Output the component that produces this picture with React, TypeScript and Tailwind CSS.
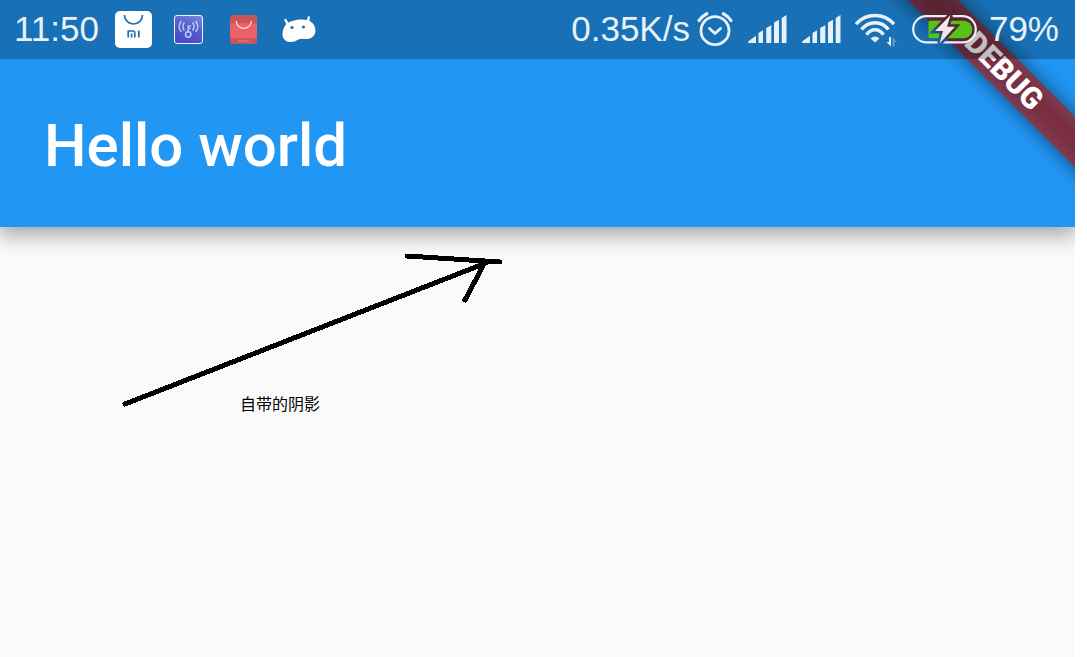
import React from 'react';

interface IconProps {
  className?: string;
}

const MiStoreIcon: React.FC<IconProps> = ({ className }) => (
  <svg viewBox="0 0 37 37" className={className} fill="none" aria-hidden="true">
    <rect width="37" height="37" rx="5" fill="#fff" />
    <path d="M9.500 4a9 9 0 0 0 18 0" stroke="#1b6fb5" strokeWidth="1.700" />
    <path d="M13.200 26.500V20h4.600q2 0 2 2v4.500M16.600 22.500v4M23.800 19.500v7" stroke="#1b6fb5" strokeWidth="1.700" />
  </svg>
);

const KeySignalIcon: React.FC<IconProps> = ({ className }) => (
  <svg viewBox="0 0 30 29" className={className} fill="none" aria-hidden="true">
    <defs>
      <linearGradient id="keyFill" x1="0.300" y1="1" x2="0.700" y2="0">
        <stop offset="0" stopColor="#4a47cc" />
        <stop offset="0.600" stopColor="#5560cc" />
        <stop offset="1" stopColor="#7284d8" />
      </linearGradient>
    </defs>
    <rect x="0.500" y="0.500" width="28" height="28" rx="2.500" fill="url(#keyFill)" stroke="#f0f2fa" />
    <g stroke="#bccdf2" strokeWidth="1.500">
      <circle cx="14.200" cy="19.500" r="2.700" />
      <path d="M14.200 17v-6.500M14.200 11h2.800M14.200 13.500h2.400" />
      <path d="M10.400 7.500q-3 4 0 8M7.400 6q-4.600 5.500 0 11M18.600 7.500q3 4 0 8M21.600 6q4.600 5.500 0 11" />
    </g>
  </svg>
);

const ShoppingBagIcon: React.FC<IconProps> = ({ className }) => (
  <svg viewBox="0 0 34 29" className={className} fill="none" aria-hidden="true">
    <rect x="4" width="27" height="29" rx="3" fill="#cb545b" />
    <path d="M4 8h27v15H4z" fill="#ee6068" />
    <circle cx="10" cy="5.500" r="1" fill="#8f3a45" />
    <circle cx="25.500" cy="5.500" r="1" fill="#8f3a45" />
    <path d="M10 5.500c1 10.500 14.500 10.500 15.500 0" stroke="#f7dcde" strokeWidth="1.300" />
    <path d="M12.500 26h10" stroke="#e9a2a6" strokeDasharray="2 1" />
  </svg>
);

const AndroidHeadIcon: React.FC<IconProps> = ({ className }) => (
  <svg viewBox="0 0 34 29" className={className} fill="none" aria-hidden="true">
    <path d="M4.500 9C10 4 24 3 28.500 6.500c5.500 3.500 6.500 11.500 2.500 15-3.500 3.500-8 2.500-11.500 2.200-3.500 0-5 3-10 3.300C4 27.500.5 24 .5 19.500.5 15 2 11.500 4.500 9Z" fill="#fff" />
    <path d="M3.500 5l3 5.500M26.800 2.500l-1.500 6" stroke="#fff" strokeWidth="2.500" strokeLinecap="round" />
    <circle cx="10" cy="12.500" r="1.600" fill="#1b6fb5" />
    <circle cx="21.500" cy="12" r="1.600" fill="#1b6fb5" />
  </svg>
);

const AlarmIcon: React.FC<IconProps> = ({ className }) => (
  <svg viewBox="0 0 36 35" className={className} fill="none" stroke="#e8f1f8" strokeLinecap="round" aria-hidden="true">
    <circle cx="19" cy="18.700" r="14" strokeWidth="2.800" />
    <path d="M3 8.500Q6 4 10.800 1.700M27.300 1.700Q32.300 4 35 8.500" strokeWidth="3.200" />
    <path d="M13.500 16.500l5.500 5 5.500-5" strokeWidth="2.800" strokeLinejoin="round" />
  </svg>
);

const SignalIcon: React.FC<IconProps> = ({ className }) => (
  <svg viewBox="0 0 40 29" className={className} fill="#e8f1f8" aria-hidden="true">
    <path d="M2 26.500L10 20.700V28H3Q2 28 2 26.500ZM12.500 18L17 15.300V28H12.500ZM20.200 13L25.300 10.300V28H20.200ZM28 7.500L33 4.800V28H28ZM35.700 3L40.500 0V28H35.700Z" />
  </svg>
);

const WifiIcon: React.FC<IconProps> = ({ className }) => (
  <svg viewBox="0 0 44 31" className={className} fill="none" aria-hidden="true">
    <g stroke="#e8f1f8" strokeWidth="3.500">
      <path d="M2 10.200Q9.500 1.500 21 1.500T40 10.200" />
      <path d="M7.500 15.500Q13 8.700 21 8.700T34.500 15.500" />
      <path d="M12.500 20.700Q16 15.800 21 15.800T29.500 20.700" />
    </g>
    <path d="M16.500 24.500q4.500-4 9 0L21 28.500Z" fill="#e8f1f8" />
    <path d="M37 23v9.500l-4.500-4.500h2.500V23Z" fill="#e8f1f8" />
    <path d="M38.500 32.500v-9.500l4.500 5h-2.500v4.500Z" fill="#5f9bcb" />
  </svg>
);

const BatteryIcon: React.FC<IconProps> = ({ className }) => (
  <svg viewBox="0 0 65 29" className={className} fill="none" aria-hidden="true">
    <mask id="boltGap" maskUnits="userSpaceOnUse" x="0" y="0" width="65" height="29">
      <path d="M0 0h65v29H0z" fill="#fff" />
      <path d="M38.600 0L23 16h8L27.500 28.500 43 11.700h-8Z" fill="#000" stroke="#000" strokeWidth="5" />
    </mask>
    <g mask="url(#boltGap)">
      <rect x="1.200" y="1.200" width="62.600" height="26.200" rx="13.100" stroke="#e8f1f8" strokeWidth="2.200" />
      <path d="M18 5.700h33.500a8.800 8.800 0 0 1 0 17.600H18q-1.500 0-1.500-1.500V7.200q0-1.500 1.500-1.500Z" fill="#55c417" />
    </g>
    <path d="M38.600 0L23 16h8L27.500 28.500 43 11.700h-8Z" fill="#efe7ee" />
  </svg>
);

const StatusBar: React.FC = () => (
  <div className="relative flex h-[59px] items-center justify-between bg-black/25 pr-4 pl-3.5 font-['Liberation_Sans',sans-serif] text-[35px] text-[#e8f1f8]">
    <div className="flex items-center gap-4">
      <time>11:50</time>
      <div className="flex items-center gap-[22px]">
        <MiStoreIcon className="h-[37px] w-[37px]" />
        <KeySignalIcon className="h-[29px] w-[30px]" />
        <ShoppingBagIcon className="h-[29px] w-[34px]" />
        <AndroidHeadIcon className="h-[29px] w-[34px]" />
      </div>
    </div>

    <div className="flex items-center gap-1.5">
      <span>0.35K/s</span>
      <div className="flex items-center gap-3.5">
        <AlarmIcon className="h-[35px] w-9 overflow-visible" />
        <SignalIcon className="h-[29px] w-10 overflow-visible" />
        <SignalIcon className="h-[29px] w-10 overflow-visible" />
        <WifiIcon className="h-[31px] w-11 overflow-visible" />
        <BatteryIcon className="h-[29px] w-[65px]" />
      </div>
      <span className="pl-1.5">79%</span>
    </div>
  </div>
);

// Corner ribbon, painted under the status bar scrim
const DebugBanner: React.FC = () => (
  <div className="absolute top-[53px] -right-[49px] h-9 w-60 rotate-45">
    <div className="absolute -inset-x-10 inset-y-0 bg-black/50 blur-[10px]" />
    <div className="relative flex h-full items-center justify-center bg-[#b71c1c]/63 font-[Roboto,sans-serif] text-3xl font-black text-white">
      DEBUG
    </div>
  </div>
);

const ShadowNote: React.FC = () => (
  <figure className="relative mt-6 ml-30 w-[390px]">
    <svg viewBox="0 0 390 160" className="w-full" fill="none" stroke="#000" strokeWidth="5" strokeLinecap="round" shapeRendering="crispEdges" aria-hidden="true">
      <path d="M5 153L366 12M287 5L380 11M364 13L345 49" />
    </svg>
    <figcaption className="absolute top-[140px] left-30 font-['Noto_Sans_CJK_SC',sans-serif] text-base text-black">
      自带的阴影
    </figcaption>
  </figure>
);

export default function App() {
  return (
    <div className="min-h-screen bg-white pr-3">
      <div className="min-h-screen overflow-hidden bg-[#fafafa]">
        {/* App bar */}
        <header className="relative overflow-hidden bg-[#2196f3] shadow-[0_6px_20px_2px_rgba(0,0,0,0.35)]">
          <DebugBanner />
          <StatusBar />
          <div className="flex h-[168px] items-center px-11 pt-1.5">
            <h1 className="font-[Roboto,sans-serif] text-6xl font-medium text-white">Hello world</h1>
          </div>
        </header>

        <main>
          <ShadowNote />
        </main>
      </div>
    </div>
  );
}
